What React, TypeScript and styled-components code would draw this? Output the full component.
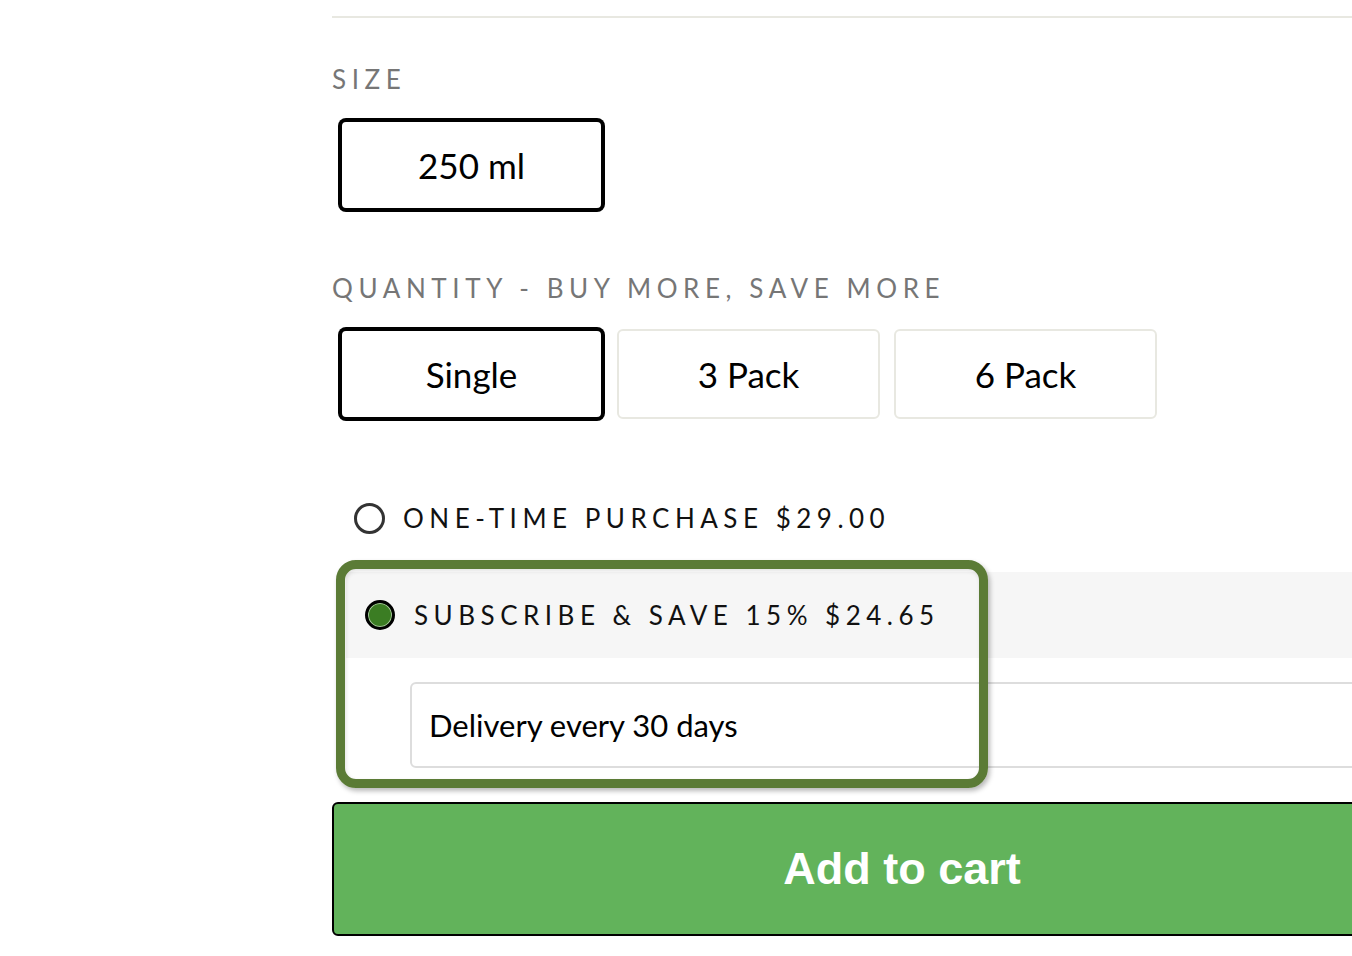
import React from "react";
import styled, { createGlobalStyle } from "styled-components";

const Global = createGlobalStyle`
  html, body {
    margin: 0;
    padding: 0;
    overflow: hidden;
    background: #ffffff;
  }
  body {
    font-family: Lato, "Noto Sans", sans-serif;
    color: #000000;
  }
`;

const Column = styled.div`
  width: 1140px;
  margin-left: 332px;
  padding-top: 16px;
`;

const Divider = styled.hr`
  margin: 0;
  border: 0;
  border-top: 2px solid #e8e8e1;
`;

const Group = styled.section<{ $top: number }>`
  margin-top: ${(p) => p.$top}px;
`;

const GroupLabel = styled.div`
  font-family: Lato, "Noto Sans", sans-serif;
  font-size: 26px;
  line-height: 26px;
  letter-spacing: 5.6px;
  color: #767676;
  text-transform: uppercase;
`;

const Swatches = styled.div`
  display: flex;
  gap: 14px;
  padding-left: 8px;
  margin-top: 28px;
`;

const Swatch = styled.button<{ $selected?: boolean }>`
  width: 263px;
  height: 90px;
  box-sizing: border-box;
  padding: 0;
  border: 2px solid ${(p) => (p.$selected ? "#000000" : "#e8e8e1")};
  box-shadow: ${(p) => (p.$selected ? "0 0 0 2px #000000" : "none")};
  border-radius: 6px;
  background: #ffffff;
  font-family: Lato, "Noto Sans", sans-serif;
  font-size: 35px;
  color: #000000;
  cursor: pointer;
`;

const OptionRow = styled.div`
  display: flex;
  align-items: center;
  gap: 18px;
  height: 40px;
  margin-top: 79px;
  padding-left: 22px;
`;

const Radio = styled.span<{ $checked?: boolean }>`
  flex: none;
  box-sizing: border-box;
  width: ${(p) => (p.$checked ? 30 : 31)}px;
  height: ${(p) => (p.$checked ? 30 : 31)}px;
  border-radius: 50%;
  border: 3px solid ${(p) => (p.$checked ? "#000000" : "#333333")};
  background: ${(p) => (p.$checked ? "#3b7d23" : "#ffffff")};
  box-shadow: ${(p) =>
    p.$checked ? "inset 0 0 0 1px rgba(255,255,255,0.55)" : "none"};
`;

const OptionText = styled.span`
  font-family: Lato, "Noto Sans", sans-serif;
  font-size: 26px;
  line-height: 40px;
  letter-spacing: 5.5px;
  color: #111111;
  white-space: nowrap;
`;

const Subscription = styled.div`
  position: relative;
  margin-top: 34px;
  margin-left: 14px;
`;

const SubscriptionHead = styled.div`
  display: flex;
  align-items: center;
  gap: 19px;
  height: 86px;
  padding-left: 19px;
  background: #f6f6f6;
`;

const SubscriptionBody = styled.div`
  padding: 24px 0 12px 64px;
`;

const Select = styled.div`
  display: flex;
  align-items: center;
  box-sizing: border-box;
  height: 86px;
  padding-left: 17px;
  border: 2px solid #dddddd;
  border-radius: 6px;
  background: #ffffff;
  font-family: Lato, "Noto Sans", sans-serif;
  font-size: 31px;
  color: #000000;
`;

const Highlight = styled.div`
  position: absolute;
  left: -10px;
  top: -12px;
  width: 652px;
  height: 228px;
  box-sizing: border-box;
  border: 9px solid #5b7b36;
  border-radius: 20px;
  box-shadow: 2px 3px 5px rgba(0, 0, 0, 0.28),
    inset 1px 2px 4px rgba(0, 0, 0, 0.12);
  pointer-events: none;
`;

const CartButton = styled.button`
  display: block;
  width: 100%;
  height: 134px;
  margin-top: 22px;
  box-sizing: border-box;
  border: 2px solid #000000;
  border-radius: 6px;
  background: #62b35b;
  color: #ffffff;
  font-family: "Liberation Sans", Arial, sans-serif;
  font-weight: 700;
  font-size: 45px;
  cursor: pointer;
`;

export default function App() {
  return (
    <>
      <Global />
      <Column>
        <Divider />
        <Group $top={48}>
          <GroupLabel>Size</GroupLabel>
          <Swatches>
            <Swatch $selected>250 ml</Swatch>
          </Swatches>
        </Group>
        <Group $top={65}>
          <GroupLabel>Quantity - Buy more, save more</GroupLabel>
          <Swatches>
            <Swatch $selected>Single</Swatch>
            <Swatch>3 Pack</Swatch>
            <Swatch>6 Pack</Swatch>
          </Swatches>
        </Group>
        <OptionRow>
          <Radio />
          <OptionText>ONE-TIME PURCHASE $29.00</OptionText>
        </OptionRow>
        <Subscription>
          <SubscriptionHead>
            <Radio $checked />
            <OptionText>SUBSCRIBE &amp; SAVE 15% $24.65</OptionText>
          </SubscriptionHead>
          <SubscriptionBody>
            <Select>Delivery every 30 days</Select>
          </SubscriptionBody>
          <Highlight />
        </Subscription>
        <CartButton>Add to cart</CartButton>
      </Column>
    </>
  );
}
